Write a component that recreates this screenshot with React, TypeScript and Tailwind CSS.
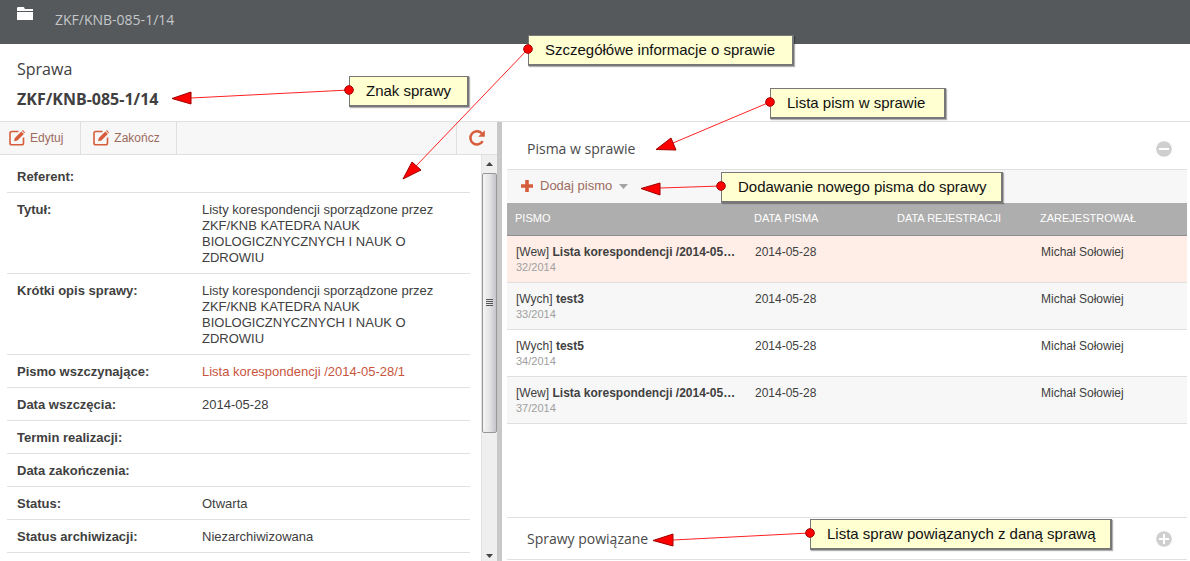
import type { ReactNode } from "react";

type Detail = { label: string; value?: string; link?: boolean };

const details: Detail[] = [
  { label: "Referent:" },
  {
    label: "Tytuł:",
    value:
      "Listy korespondencji sporządzone przez ZKF/KNB KATEDRA NAUK BIOLOGICZNYCZNYCH I NAUK O ZDROWIU",
  },
  {
    label: "Krótki opis sprawy:",
    value:
      "Listy korespondencji sporządzone przez ZKF/KNB KATEDRA NAUK BIOLOGICZNYCZNYCH I NAUK O ZDROWIU",
  },
  { label: "Pismo wszczynające:", value: "Lista korespondencji /2014-05-28/1", link: true },
  { label: "Data wszczęcia:", value: "2014-05-28" },
  { label: "Termin realizacji:" },
  { label: "Data zakończenia:" },
  { label: "Status:", value: "Otwarta" },
  { label: "Status archiwizacji:", value: "Niezarchiwizowana" },
];

const letters = [
  { kind: "[Wew]", title: "Lista korespondencji /2014-05…", no: "32/2014", tone: "bg-[#ffeee7]" },
  { kind: "[Wych]", title: "test3", no: "33/2014", tone: "bg-[#f7f7f7]" },
  { kind: "[Wych]", title: "test5", no: "34/2014", tone: "bg-white" },
  { kind: "[Wew]", title: "Lista korespondencji /2014-05…", no: "37/2014", tone: "bg-[#f7f7f7]" },
];

function FolderIcon() {
  return (
    <svg width="16" height="13" viewBox="0 0 16 13" fill="#fff" aria-hidden="true">
      <path d="M0 4V1.2Q0 0 1.2 0H6.200Q7.200 0 7.500 1L7.800 2H16V4Z" />
      <path d="M0 5H16V13H0Z" />
    </svg>
  );
}

function EditIcon() {
  return (
    <svg width="16" height="16" viewBox="0 0 16 16" fill="none" aria-hidden="true">
      <path
        d="M9.500 1.500H2.800Q1 1.500 1 3.300V13Q1 14.800 2.800 14.800H12.700Q14.500 14.800 14.500 13V7.500"
        stroke="#d65c3c"
        strokeWidth="1.600"
      />
      <path d="M5 11.300L5.800 8L12.300 1.500L14.900 4.100L8.400 10.600Z" fill="#d65c3c" />
      <path d="M13 0.800L13.800 0L16 2.300L15.400 3.200Z" fill="#d65c3c" />
    </svg>
  );
}

function RefreshIcon() {
  return (
    <svg width="18" height="18" viewBox="0 0 18 18" fill="none" aria-hidden="true">
      <path d="M13.800 4.300A6.600 6.600 0 1 0 14.700 12.200" stroke="#d65c3c" strokeWidth="2.500" />
      <path d="M16.800 1.300V7.800H10.200Z" fill="#d65c3c" />
    </svg>
  );
}

function PlusIcon() {
  return (
    <svg width="12" height="12" viewBox="0 0 12 12" fill="#d65c3c" aria-hidden="true">
      <path d="M4.200 0H7.800V4.200H12V7.800H7.800V12H4.200V7.800H0V4.200H4.200Z" />
    </svg>
  );
}

function ToggleIcon({ open }: { open: boolean }) {
  return (
    <svg width="16" height="16" viewBox="0 0 16 16" aria-hidden="true">
      <circle cx="8" cy="8" r="7.800" fill="#cfcfcf" />
      <path d={open ? "M3 7H13V9H3Z" : "M3 7H7V3H9V7H13V9H9V13H7V9H3Z"} fill="#fff" />
    </svg>
  );
}

function SectionHeading({ open, children }: { open: boolean; children: ReactNode }) {
  return (
    <div className="flex items-center justify-between border-b border-[#e0e0e0] pr-[15px] pl-5">
      <h2 className="font-['Open_Sans','Noto_Sans',sans-serif] text-sm text-[#4a4a4a]">{children}</h2>
      <button type="button" aria-label={open ? "Zwiń" : "Rozwiń"}>
        <ToggleIcon open={open} />
      </button>
    </div>
  );
}

function Scrollbar() {
  return (
    <div
      className="flex w-4 shrink-0 flex-col border-l border-[#e3e3e3] bg-[#efefef]"
      aria-hidden="true"
    >
      <div className="flex h-[18px] shrink-0 items-center justify-center">
        <svg width="7" height="4" viewBox="0 0 7 4" fill="#444">
          <path d="M0 4L3.500 0L7 4Z" />
        </svg>
      </div>
      <div className="flex h-[64%] shrink-0 flex-col items-center justify-center rounded-[2px] border border-[#979797] bg-linear-to-r from-[#f5f5f5] via-[#e4e4e6] to-[#c4c4ca]">
        <div className="flex flex-col gap-px">
          <span className="h-px w-[7px] bg-[#555]" />
          <span className="h-px w-[7px] bg-[#555]" />
          <span className="h-px w-[7px] bg-[#555]" />
          <span className="h-px w-[7px] bg-[#555]" />
        </div>
      </div>
      <div className="flex grow flex-col items-center justify-end pb-[3px]">
        <svg width="7" height="4" viewBox="0 0 7 4" fill="#444">
          <path d="M0 0H7L3.500 4Z" />
        </svg>
      </div>
    </div>
  );
}

function DetailsPanel() {
  return (
    <section className="flex w-[497px] shrink-0 flex-col overflow-hidden">
      <div className="flex h-[33px] shrink-0 border-b border-[#e0e0e0] bg-[#f7f7f7] text-[12px] text-[#9c6b5e]">
        <button type="button" className="flex items-center gap-[5px] border-r border-[#e0e0e0] pr-[17px] pl-[9px]">
          <EditIcon />
          Edytuj
        </button>
        <button type="button" className="flex items-center gap-[5px] border-r border-[#e0e0e0] pr-4 pl-3">
          <EditIcon />
          Zakończ
        </button>
        <button
          type="button"
          aria-label="Odśwież"
          className="ml-auto flex w-[41px] items-center justify-center border-l border-[#e0e0e0]"
        >
          <RefreshIcon />
        </button>
      </div>
      <div className="flex min-h-0 grow">
        <dl className="min-w-0 grow overflow-hidden pt-[5px] pr-[11px] pl-[7px] text-[13px] leading-4">
          {details.map((d) => (
            <div key={d.label} className="flex border-b border-[#e0e0e0] px-2.5 pt-[9px] pb-[7px]">
              <dt className="w-[185px] shrink-0 font-bold">{d.label}</dt>
              <dd className="min-w-0">
                {d.link ? (
                  <a href="#pismo" className="text-[#c8553d]">
                    {d.value}
                  </a>
                ) : (
                  d.value
                )}
              </dd>
            </div>
          ))}
        </dl>
        <Scrollbar />
      </div>
    </section>
  );
}

function LettersPanel() {
  return (
    <section className="flex min-w-0 grow flex-col pr-[3px] pl-[5px]">
      <div className="grid h-12 shrink-0 pt-[6px]">
        <SectionHeading open>Pisma w sprawie</SectionHeading>
      </div>
      <div className="flex h-[33px] shrink-0 bg-[#f7f7f7] pb-px pl-3.5 text-[13px] text-[#9c6b5e]">
        <button type="button" className="flex items-center">
          <PlusIcon />
          <span className="pr-[7px] pl-[7px]">Dodaj pismo</span>
          <svg width="9" height="5" viewBox="0 0 9 5" fill="#a3a3a3" aria-hidden="true">
            <path d="M0 0H9L4.500 5Z" />
          </svg>
        </button>
      </div>
      <table className="w-full table-fixed border-collapse text-left">
        <thead>
          <tr className="h-8 border-b border-[#8f8f8f] bg-[#aeaeae] text-[11px] text-white">
            <th className="w-[239px] px-2 pb-0.5 font-normal">PISMO</th>
            <th className="w-[143px] px-2 pb-0.5 font-normal">DATA PISMA</th>
            <th className="w-[143px] px-2 pb-0.5 font-normal">DATA REJESTRACJI</th>
            <th className="px-2 pb-0.5 font-normal">ZAREJESTROWAŁ</th>
          </tr>
        </thead>
        <tbody className="text-[12px] leading-4">
          {letters.map((l) => (
            <tr key={l.no} className={`h-[47px] border-b border-[#e0e0e0] align-top ${l.tone}`}>
              <td className="pt-2 pl-[9px]">
                <div className="whitespace-nowrap">
                  {l.kind} <b>{l.title}</b>
                </div>
                <div className="text-[11px] leading-[14px] text-[#a0a0a0]">{l.no}</div>
              </td>
              <td className="px-[9px] pt-2">2014-05-28</td>
              <td />
              <td className="px-[9px] pt-2">Michał Sołowiej</td>
            </tr>
          ))}
        </tbody>
      </table>
      <div className="mt-auto mb-px grid h-[43px] shrink-0 border-t border-[#e0e0e0]">
        <SectionHeading open={false}>Sprawy powiązane</SectionHeading>
      </div>
    </section>
  );
}

function Note({ place, children }: { place: string; children: ReactNode }) {
  return (
    <div
      className={`absolute flex h-[31px] items-center border-t border-r-2 border-b-2 border-l border-[#777] bg-[#ffffd2] pl-4 text-[15px] whitespace-nowrap text-[#111] shadow-[1px_1px_1px_#0000004d] ${place}`}
    >
      {children}
    </div>
  );
}

const arrows = [
  { dot: [528, 49], base: [416, 166], head: "403,179 412,162 421,170" },
  { dot: [349, 90], base: [191, 98], head: "172,98.500 191,92 191,104" },
  { dot: [770, 102], base: [673, 143], head: "656,149.500 671,138 676,150" },
  { dot: [721, 186], base: [660, 188], head: "641,188.500 660,183 660,195" },
  { dot: [810, 533], base: [673, 540], head: "653,540.500 673,534 673,546" },
];

function Annotations() {
  return (
    <div className="pointer-events-none absolute inset-0 overflow-hidden">
      <Note place="left-[528px] top-[35px] w-[266px]">Szczegółówe informacje o sprawie</Note>
      <Note place="left-[349px] top-[76px] w-[120px]">Znak sprawy</Note>
      <Note place="left-[770px] top-[88px] w-[176px]">Lista pism w sprawie</Note>
      <Note place="left-[721px] top-[172px] w-[282px]">Dodawanie nowego pisma do sprawy</Note>
      <Note place="left-[810px] top-[519px] w-[302px]">Lista spraw powiązanych z daną sprawą</Note>
      <svg className="absolute inset-0 h-full w-full" fill="#f00" stroke="#a00000" aria-hidden="true">
        {arrows.map((a) => (
          <g key={a.head}>
            <line x1={a.dot[0]} y1={a.dot[1]} x2={a.base[0]} y2={a.base[1]} stroke="#f22" />
            <polygon points={a.head} />
            <circle cx={a.dot[0]} cy={a.dot[1]} r="4.300" />
          </g>
        ))}
      </svg>
    </div>
  );
}

export default function App() {
  return (
    <div className="relative flex h-screen flex-col overflow-hidden bg-white font-['Liberation_Sans',Arial,sans-serif] text-[#404040]">
      <header className="flex h-11 shrink-0 items-start gap-[22px] bg-[#55595c] px-[17px] pt-[7px]">
        <FolderIcon />
        <span className="pt-[3px] font-['Open_Sans','Noto_Sans',sans-serif] text-sm text-[#c4c6c8]">
          ZKF/KNB-085-1/14
        </span>
      </header>
      <div className="flex h-[78px] shrink-0 flex-col gap-1.5 border-b border-[#e0e0e0] px-[17px] pt-[13px] font-['Open_Sans','Noto_Sans',sans-serif] text-base">
        <p>Sprawa</p>
        <h1 className="font-bold">ZKF/KNB-085-1/14</h1>
      </div>
      <main className="flex min-h-0 grow">
        <DetailsPanel />
        <div className="w-[5px] shrink-0 bg-[#c8c8c8]" />
        <LettersPanel />
      </main>
      <Annotations />
    </div>
  );
}
